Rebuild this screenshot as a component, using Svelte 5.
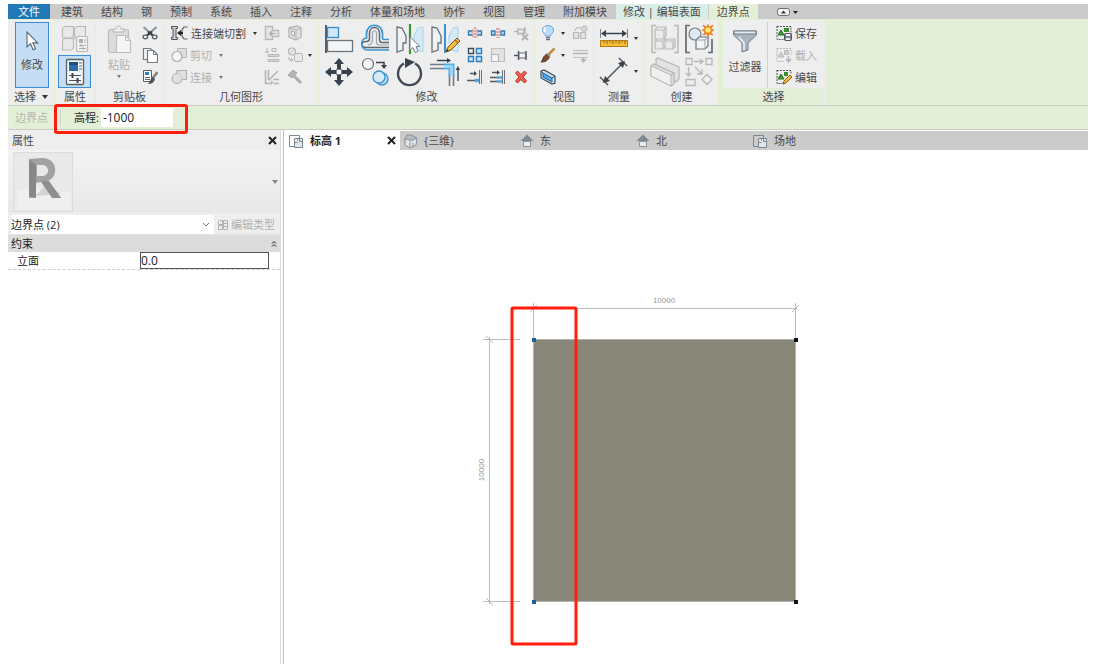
<script>
	const tabs = ['建筑', '结构', '钢', '预制', '系统', '插入', '注释', '分析', '体量和场地', '协作', '视图', '管理', '附加模块'];

	const views = [
		{ title: '标高 1', icon: 'plan', active: true },
		{ title: '{三维}', icon: 'cube' },
		{ title: '东', icon: 'house' },
		{ title: '北', icon: 'house' },
		{ title: '场地', icon: 'plan' }
	];

	const modifyBig = [
		['align', '对齐'], ['offset', '偏移'], ['mirrorPick', '镜像 - 拾取轴'], ['mirrorDraw', '镜像 - 绘制轴'],
		['move', '移动'], ['copyObj', '复制'], ['rotate', '旋转'], ['trimCorner', '修剪为角']
	];
	const modifySmall = [
		['split', '拆分图元'], ['splitGap', '用间隙拆分'], ['unpin', '解锁'],
		['array', '阵列'], ['scale', '缩放'], ['pin', '锁定'],
		['trimOne', '修剪单个图元'], ['trimMany', '修剪多个图元'], ['remove', '删除']
	];
	const geometry = [
		{ icon: 'cope', text: '连接端切割', side: ['joinEnd', 'face'] },
		{ icon: 'cut', text: '剪切', off: true, side: ['beamJoin', 'splitFace'], caret: true },
		{ icon: 'join', text: '连接', off: true, side: ['wallJoin', 'hammer'] }
	];
	const selection = [
		{ icon: 'selSave', text: '保存' },
		{ icon: 'selLoad', text: '载入', off: true },
		{ icon: 'selEdit', text: '编辑' }
	];

	let elevation = $state('-1000');
	let facade = $state('0.0');

	// every entry: [width, height, body]
	const icons = {
		cursor: [14, 20, '<path d="M2 1v15l3.5-3.3 2.6 6 2.4-1-2.6-5.8h4.8z" fill="#fff" stroke="#5b6672" stroke-width="1.1"/>'],
		types: [28, 28, '<g fill="#e9e9e9" stroke="#bababa" stroke-width="1.200"><path d="M1.500 4l2-2.500h9v9l-2 2.500h-9zM13.500 4l2-2.500h9v9l-2 2.500h-9zM1.500 16l2-2.500h9v9l-2 2.500h-9z"/><rect x="15.500" y="11.500" width="11" height="15" rx="1" fill="#f3f3f3"/></g><path d="M18 14h4v4h-4z" fill="#b0b0b0"/><path d="M18 20.500h7M18 23.500h7M24 14v4M20 19v3M22 22v3" stroke="#b0b0b0"/>'],
		props: [20, 28, '<rect x="1.500" y="1.500" width="17" height="25" rx="1" fill="#f6f8fa" stroke="#56606a" stroke-width="1.300"/><path d="M4 4h9v9H4z" fill="#2d6ea8"/><path d="M4 4h9v3H4z" fill="#1c4f7d"/><path d="M14 5h3M14 8h3M14 11h3" stroke="#596370"/><path d="M4 17.500h12M4 22.500h12" stroke="#4c5660"/><path d="M7.500 15v5M12.500 20v5" stroke="#3c454e" stroke-width="2"/>'],
		paste: [25, 29, '<rect x="1.500" y="4.500" width="20" height="23" rx="2" fill="#dcdcdc" stroke="#bababa" stroke-width="1.200"/><path d="M6 7V4h3c0-4 5-4 5 0h3v3z" fill="#eee" stroke="#b5b5b5"/><path d="M9.500 10.500h9l5 5v12h-14z" fill="#f5f5f5" stroke="#bfbfbf" stroke-width="1.200"/><path d="M18.500 10.500v5h5" fill="none" stroke="#bfbfbf"/>'],
		scissors: [16, 16, '<path d="M1.500 2l10 9M14.500 2l-10 9" stroke="#8c949c" stroke-width="2"/><path d="M6 6.500l5 4M10 6.500l-5 4" stroke="#333b43" stroke-width="2"/><g fill="#f3f3f3" stroke="#545c64" stroke-width="1.300"><ellipse cx="3.300" cy="12" rx="2.300" ry="1.800"/><ellipse cx="12.700" cy="12" rx="2.300" ry="1.800"/></g>'],
		copy: [16, 16, '<path d="M1.500 1.500h7l2 2v9h-9z" fill="#f4f4f4" stroke="#727a82" stroke-width="1.200"/><path d="M5.500 3.500h6l4 4v8h-10z" fill="#fff" stroke="#727a82" stroke-width="1.200"/><path d="M11.500 3.500v4h4" fill="none" stroke="#727a82"/>'],
		match: [16, 16, '<path d="M1.500 1.500h8v11h-8z" fill="#fff" stroke="#56606a"/><path d="M3 3h4v3H3z" fill="#2b83c6"/><path d="M3 8.500h5M3 10.500h5" stroke="#56606a"/><path d="M15.500 3L10 10" stroke="#7d858d" stroke-width="2.500"/><path d="M11 8l2 2c-1 4-4 5-7 5 2-2 2-5 5-7z" fill="#4c545c"/>'],
		cope: [17, 16, '<path d="M.5 1.500h6v2H5v9h1.500v2h-6v-2H2v-9H.5z" fill="#c9ced3" stroke="#4a525a"/><path d="M16.500 2H13l-2 3v2M16.500 14H13l-2-3V9" fill="none" stroke="#59626b" stroke-width="1.200"/><path d="M6 8l4-3v2h2v2h-2v2z" fill="#222"/>'],
		cut: [16, 16, '<path d="M6.500 1.500h9v9h-9z" fill="#dedede" stroke="#b4b4b4"/><circle cx="6" cy="9.500" r="5" fill="#f4f4f4" stroke="#b0b0b0" stroke-width="1.200"/>'],
		join: [16, 16, '<path d="M6 1.500h9.500v9H11a5 5 0 1 1-5-6z" fill="#e0e0e0" stroke="#b0b0b0" stroke-width="1.200"/><path d="M6 4.500a5 5 0 0 1 5 6" fill="none" stroke="#c6c6c6"/>'],
		joinEnd: [16, 16, '<path d="M1.500 1.500h7v4h6v6h-6v3h-7z" fill="#e4e4e4" stroke="#b9b9b9" stroke-width="1.400"/><path d="M5 8.500h7M5 8.500l3-2.500v5z" stroke="#b0b0b0" fill="#b0b0b0"/>'],
		face: [16, 16, '<path d="M2 3l8-2 4 2v9l-5 3-7-3z" fill="#e2e2e2" stroke="#b3b3b3" stroke-width="1.300"/><path d="M2 3l7 2v10M9 5l5-2" fill="none" stroke="#b3b3b3"/><path d="M4.500 6l3 1v4l-3-1z" fill="#f4f4f4" stroke="#a6a6a6"/>'],
		beamJoin: [16, 16, '<path d="M3 1v5M1 4l2 2 2-2M8 1.500h4v3H8z" fill="none" stroke="#b5b5b5"/><path d="M4 7.500h11v2H4zM4 12.500h11v2H4z" fill="#d8d8d8" stroke="#b8b8b8"/>'],
		splitFace: [16, 16, '<circle cx="5" cy="4.500" r="3.500" fill="none" stroke="#b5b5b5" stroke-width="1.200"/><path d="M2.500 7l5-5M2 10v3h3M4 11l2 2-2 2" fill="none" stroke="#b5b5b5"/><rect x="7.500" y="6.500" width="8" height="8" rx="1" fill="#e8e8e8" stroke="#b5b5b5"/>'],
		wallJoin: [16, 16, '<path d="M1.500 1v13.500H8M4.500 1v10M4.500 11.500L14 2M7 12l2 2M9.500 10.500H15M9.500 14.500H15" fill="none" stroke="#b4b4b4" stroke-width="1.500"/>'],
		hammer: [16, 16, '<path d="M1 6l5-5 4 3-5 5z" fill="#b5b5b5" stroke="#a6a6a6"/><path d="M7 7l7 7" stroke="#acacac" stroke-width="3"/>'],
		align: [30, 30, '<path d="M2 1v28" stroke="#333a42" stroke-width="1.600"/><rect x="3.500" y="3.500" width="11" height="10" fill="#cfe7f8" stroke="#318bcd" stroke-width="1.300"/><rect x="3.500" y="16.500" width="25" height="11" fill="#f3f4f5" stroke="#6d747c" stroke-width="1.300"/>'],
		offset: [30, 30, '<path d="M29 18.500h-7c-2 0-2.500-1-2.500-3V9.500c0-8-10-8-10 0v5c0 2-1 3-3 3-6 0-6 6 0 6h22.500" fill="none" stroke="#5d656e" stroke-width="1.500"/><path d="M29 21H19c-2 0-2.500-1-2.500-3V9c0-3-4-3-4 0v6c0 4-1 6-5 6" fill="none" stroke="#9fa6ad" stroke-width="1.200"/><path d="M29 15.500h-5c-1 0-1.500-.5-1.500-1.500V9.500c0-11-16-11-16 0V14c-7 1-6 12 1 12H29" fill="none" stroke="#3d94d3" stroke-width="1.700"/>'],
		mirrorPick: [30, 30, '<path d="M2 3l5 1 4 8v7H8v7l-6 2z" fill="#f0f1f2" stroke="#69717a" stroke-width="1.300"/><path d="M28 3l-5 1-4 8v7h3v7l6 2z" fill="#d5eaf7" stroke="#a8d3ee"/><path d="M15 0v30" stroke="#35972d" stroke-width="2.200"/><path d="M15 13v13l3-2.500 2 5 3-1-2-5h4z" fill="#fff" stroke="#7c838a"/>'],
		mirrorDraw: [30, 30, '<path d="M2 3l5 1 4 8v7H8v7l-6 2z" fill="#f0f1f2" stroke="#69717a" stroke-width="1.300"/><path d="M28 3l-5 1-4 8v7h3v7l6 2z" fill="#d5eaf7" stroke="#a8d3ee"/><path d="M15 0v29" stroke="#3692d4" stroke-width="2"/><path d="M16 28l2-5 9-9 3 3-9 9z" fill="#f5bd38" stroke="#765224"/><path d="M25 16l3 3" stroke="#d5584c" stroke-width="1.500"/><path d="M16 28l1-3 2 2z" fill="#333"/>'],
		move: [30, 30, '<path d="M15 1l5 6h-3v5h-4V7h-3zM15 29l5-6h-3v-5h-4v5h-3zM1 15l6-5v3h5v4H7v3zM29 15l-6-5v3h-5v4h5v3z" fill="#39424c"/><rect x="12.500" y="12.500" width="5" height="5" fill="#fff" stroke="#77808a"/>'],
		copyObj: [30, 30, '<circle cx="8" cy="7" r="5.500" fill="#f8f8f8" stroke="#666e76" stroke-width="1.200"/><path d="M16 5.500h8v4" fill="none" stroke="#39424c" stroke-width="1.500"/><path d="M21 8h6l-3 4z" fill="#39424c"/><circle cx="22" cy="22" r="6" fill="#b8daf2" stroke="#3b91cf" stroke-width="1.300"/><circle cx="19" cy="20" r="6" fill="#d6ebf9" stroke="#3b91cf" stroke-width="1.300"/>'],
		rotate: [30, 30, '<path d="M20 6.500A11.500 11.500 0 1 1 9 6.500" fill="none" stroke="#414a54" stroke-width="2.400"/><path d="M10 1l10 4-10 6z" fill="#39424c"/>'],
		trimCorner: [30, 30, '<path d="M0 7.500h15M0 11.500h15M19.500 17v12M23.500 17v12" stroke="#727a83" stroke-width="1.600"/><path d="M14 9.500h7.500V19" fill="none" stroke="#52aee9" stroke-width="6"/><path d="M14 9.500h7.500V19" fill="none" stroke="#9ed5f8" stroke-width="3"/><path d="M7 3.500h11M28 24V12" stroke="#39424c" stroke-width="1.300"/><path d="M17 1l4 2.500L17 6zM25.500 13L28 9l2 4z" fill="#39424c"/>'],
		split: [16, 16, '<path d="M1.500 6h13v4h-13z" fill="#b9dcf4" stroke="#3478ae" stroke-width="1.300"/><path d="M6 5h4v6H6z" fill="#f2dede"/><path d="M8 2v12" stroke="#dc5a50" stroke-dasharray="2 1"/><path d="M6 3.500v9M10 3.500v9" stroke="#e39a94"/>'],
		splitGap: [16, 16, '<path d="M1.500 6H5v4H1.500zM11 6h3.500v4H11z" fill="#b9dcf4" stroke="#3478ae" stroke-width="1.300"/><path d="M7 3v10M9 3v10" stroke="#dc5a50" stroke-dasharray="2 1"/>'],
		unpin: [16, 16, '<path d="M1 6.500h4M5 3v7M6 4.500h5v4H6M12 2v7" fill="none" stroke="#b4b4b4" stroke-width="1.400"/><path d="M9 9l6 6M15 9l-6 6" stroke="#b4b4b4" stroke-width="2"/>'],
		array: [16, 16, '<g fill="#c9e4f7" stroke="#2c7fbd" stroke-width="1.400"><path d="M9.500 1.500h5v5h-5zM1.500 9.500h5v5h-5zM9.500 9.500h5v5h-5z"/></g><path d="M1.500 1.500h5v5h-5z" fill="#f4f4f4" stroke="#414a54" stroke-width="1.400"/>'],
		scale: [16, 16, '<path d="M1.500 1.500h13v13h-13z" fill="#e3e3e3" stroke="#c0c0c0" stroke-width="1.200"/><path d="M1.500 7.500h7v7h-7z" fill="#f5f5f5" stroke="#b6b6b6" stroke-width="1.200"/>'],
		pin: [16, 16, '<path d="M1 8.500h4" stroke="#49515a" stroke-width="1.400"/><path d="M5.500 4v9M13 4v9" stroke="#49515a" stroke-width="1.400"/><path d="M6 6h6.500v5H6z" fill="#f3f4f5" stroke="#5f6770"/>'],
		trimOne: [16, 16, '<path d="M3 4.500h6M0 11.500h9" stroke="#525b65" stroke-width="1.600"/><path d="M7 2l3 2.500L7 7z" fill="#414a54"/><path d="M8 11.500h5" stroke="#48a7e5" stroke-width="3.500"/><path d="M12.500 1v14M14.500 1v14" stroke="#69717a"/>'],
		trimMany: [16, 16, '<path d="M2 3.500h6M0 8.500h8M0 12.500h8" stroke="#525b65" stroke-width="1.600"/><path d="M7 1l3 2.500L7 6z" fill="#414a54"/><path d="M7 8.500h5M7 12.500h5" stroke="#48a7e5" stroke-width="2.500"/><path d="M12.500 1v14M14.500 1v14" stroke="#69717a"/>'],
		remove: [16, 16, '<path d="M2.500 4l2-2L8 5.500 11.500 2l2 2L10 8l3.500 4-2 2L8 10.500 4.500 14l-2-2L6 8z" fill="#ee5c50" stroke="#be3028"/>'],
		bulb: [16, 16, '<path d="M5.500 11c0-2-3-3-3-6 0-6 11-6 11 0 0 3-3 4-3 6z" fill="#bcdcf8" stroke="#6aa8dc"/><path d="M5.500 2.500C4 4 4.500 6 5 7" stroke="#fff" stroke-width="2" fill="none"/><path d="M6 12.500h4M6 14.500h4" stroke="#68727c" stroke-width="1.400"/>'],
		brush: [16, 16, '<path d="M14.500 1.500L8 8" stroke="#c98744" stroke-width="2.500"/><path d="M7 7l2.500 2.500C8 14 5 15 1 15c2-2 2-6 6-8z" fill="#7b4a2a" stroke="#5a3a26"/><path d="M7.500 6.500L10 9" stroke="#999" stroke-width="2"/>'],
		box3d: [16, 16, '<path d="M1 2l3-1 11 6v7l-3 1L1 9z" fill="#cfe2f1" stroke="#3c4c5c" stroke-width="1.200"/><path d="M3 4l9 5v4L3 8z" fill="#4fa8ea" stroke="#1e689f"/><path d="M12 9l3-2M1 2l2 2" stroke="#3c4c5c"/>'],
		displace: [16, 16, '<path d="M1.500 7.500h5v6h-5zM8.500 7.500h5v6h-5z" fill="#e4e4e4" stroke="#b8b8b8" stroke-width="1.200"/><path d="M3 6c0-3 3-4 6-3" fill="none" stroke="#b8b8b8" stroke-width="1.200"/><circle cx="12" cy="4" r="2.500" fill="#ddd" stroke="#b8b8b8"/><path d="M12 0v2M15 1l-1 1M16 4h-2" stroke="#b8b8b8"/>'],
		lines: [16, 16, '<path d="M1 3.500h15" stroke="#bbb"/><path d="M1 6.500h15" stroke="#b5b5b5" stroke-width="1.600"/><path d="M1 10.500h15" stroke="#c4c4c4"/><path d="M11.500 10v4M9 12l2.500 3 2.500-3" fill="none" stroke="#b5b5b5" stroke-width="1.500"/>'],
		ruler: [30, 20, '<path d="M4 4.500h22" stroke="#39424c" stroke-width="1.500"/><path d="M2 4.500L7 1v7zM28 4.500L23 1v7z" fill="#39424c"/><path d="M1.500 0v9M28.500 0v9" stroke="#7a838c"/><rect x="1.500" y="11.500" width="27" height="6" fill="#f5bf35" stroke="#b47c14"/><path d="M5 12v2M8 12v3M11 12v2M14 12v3M17 12v2M20 12v3M23 12v2M26 12v3" stroke="#8a611d"/>'],
		aligned: [30, 30, '<path d="M5 25L25 5M1 20l8 8M20 1l8 8" stroke="#4b555f" stroke-width="1.500"/><path d="M4 26l2-7 5 5zM26 4l-7 2 5 5z" fill="#39424c"/>'],
		assembly: [30, 30, '<path d="M6 1.500H2v27h4M24 1.500h4v27h-4" fill="none" stroke="#b8b8b8" stroke-width="1.500"/><g fill="#ebebeb" stroke="#b9b9b9" stroke-width="1.200"><path d="M5 6l2-3h9v9l-2 3H5zM5 17l2-2h8v8l-2 2H5zM15 17l2-2h8v8l-2 2h-8z"/><path d="M5 6h9v9M14 6l2-3M5 17h8v8M15 17h8v8" fill="none"/></g>'],
		createGroup: [30, 30, '<path d="M6 1.500H2v27h4M24 28.500h4V15" fill="none" stroke="#626c76" stroke-width="1.700"/><circle cx="11" cy="10" r="6" fill="#dfe9f1" stroke="#74808b" stroke-width="1.200"/><path d="M12 16l3-3h9v9l-3 3h-9z" fill="#f3f4f5" stroke="#6c757e" stroke-width="1.200"/><path d="M12 16h9v9M21 16l3-3" fill="none" stroke="#9ca4ac"/><path d="M24 0l1 3 4-2-2 4 3 1-3 2 2 3-4-1-1 3-1-3-4 1 2-3-3-2 3-1-2-4 4 2z" fill="#f48c20" stroke="#d9640d" stroke-width=".5"/><circle cx="24" cy="6" r="2.600" fill="#ffe779"/>'],
		parts: [30, 30, '<path d="M6 8V2l2-1 21 9v12l-3 3z" fill="#e2e2e2" stroke="#b8b8b8" stroke-width="1.200"/><path d="M1 9l3-2 20 9v11l-3 2L1 19z" fill="#dcdcdc" stroke="#b4b4b4" stroke-width="1.200"/><path d="M1 9l20 9v11L1 19z" fill="#f1f1f1" stroke="#b8b8b8"/><path d="M21 18l3-2" stroke="#b8b8b8"/>'],
		similar: [30, 30, '<g fill="#eee" stroke="#b7b7b7" stroke-width="1.300"><path d="M2 1.500h6v6H2zM22 1.500h6v6h-6zM2 22.500h9v6H2zM23 17.500l5 5-5 5-5-5z"/><path d="M10 4.500h9M16 2l3 2.500L16 7M4.500 10v8M2 16l2.500 3L7 16M11 10l7 7M13 17h5v-5" fill="none"/></g>'],
		filter: [26, 24, '<path d="M1.500 2h23v4L16 14v7l-6 2v-9L1.500 6z" fill="#a9b4bf" stroke="#747e88"/><path d="M2 2h22v3H2z" fill="#e6ebef" stroke="#747e88"/><path d="M7 8l5 6v7" fill="none" stroke="#dfe5ea" stroke-width="2"/>'],
		selSave: [16, 16, '<path d="M1 1.500h14V9M1 1v13.500h7" fill="none" stroke="#505860" stroke-dasharray="2 1"/><path d="M2 10l3-5 3 5z" fill="#3e9b35" stroke="#29751f"/><path d="M8 3h5v4H8z" fill="#3a8d31"/><rect x="8.500" y="8.500" width="7" height="7" rx="1" fill="#7d8690" stroke="#4f5962"/><path d="M10 9h4v2h-4zM10 13h4v2h-4z" fill="#eef1f3"/>'],
		selLoad: [16, 16, '<path d="M1 1.500h14V9M1 1v13.500h7" fill="none" stroke="#bbb" stroke-dasharray="2 1"/><path d="M2 10l3-5 3 5zM8.500 3.500h4v4h-4z" fill="#ccc" stroke="#bbb"/><path d="M12.500 9v5M10 12l2.500 3 2.500-3" fill="none" stroke="#b5b5b5" stroke-width="1.500"/>'],
		selEdit: [16, 16, '<path d="M1 1.500h14V5M1 1v13.500h7" fill="none" stroke="#505860" stroke-dasharray="2 1"/><path d="M2 10l3-5 3 5z" fill="#3e9b35" stroke="#29751f"/><path d="M8 3h4v4H8z" fill="#3a8d31"/><path d="M7 15l1-3 6-6 2 2-6 6z" fill="#f5bd38" stroke="#8c5b20"/>'],
		plan: [16, 16, '<path d="M1.500 2.500h10v3M7 13.500H1.500v-11" fill="none" stroke="#7d8791"/><path d="M6.500 5.500h8v9h-8z" fill="#e4e7ea" stroke="#7d8791"/><path d="M6.500 9.500h3M9.500 5.500v2M11.500 5.500v3h3" fill="none" stroke="#7d8791"/>'],
		cube: [14, 16, '<path d="M1 6l6-4 6 4-1 6-6 3-5-3z" fill="#e3e6e9" stroke="#8a929a"/><path d="M0 7l3-5 4 0 6 3-6 3-4-2z" fill="#b6bcc2" stroke="#8a929a"/><path d="M6 9v6M9 10v4" fill="none" stroke="#8a929a"/>'],
		house: [14, 16, '<path d="M7 1.500L0.500 8h13z" fill="#7f878f"/><path d="M3.500 8.500h7v5h-7z" fill="#e9ebed" stroke="#8b939b"/>'],
		editType: [12, 12, '<g fill="none" stroke="#b0b0b0"><path d="M1.500 2.500l1-1h3v4h-4zM1.500 6.500h4v4h-4zM6.500 1.500h4v9h-4zM6.500 4.500h4M6.500 7.500h4"/></g>']
	};
</script>

{#snippet icon(name)}
	<svg class="icon" width={icons[name][0]} height={icons[name][1]} viewBox="0 0 {icons[name][0]} {icons[name][1]}" aria-hidden="true">
		{@html icons[name][2]}
	</svg>
{/snippet}

{#snippet tool(name, label)}
	<button class="tool" aria-label={label}>{@render icon(name)}</button>
{/snippet}

<div class="app">
	<!-- Ribbon tabs -->
	<nav class="tabs">
		<button class="file">文件</button>
		{#each tabs as tab}
			<button>{tab}</button>
		{/each}
		<button class="context">修改 | 编辑表面</button>
		<button class="current">边界点</button>
		<button class="collapse" aria-label="最小化功能区">
			<svg width="24" height="10" viewBox="0 0 24 10"><rect x="1.500" y="1.500" width="12" height="7" rx="2" fill="#f1f1f1" stroke="#656b74" /><path d="M5 6.500l2.500-3 2.500 3z" fill="#333" /><path d="M17 4h5l-2.500 3z" fill="#222" /></svg>
		</button>
	</nav>

	<!-- Ribbon panels -->
	<div class="ribbon">
		<section class="panel select">
			<div class="body"><button class="big on">{@render icon('cursor')}<span>修改</span></button></div>
			<h2>选择 <i class="caret wide"></i></h2>
		</section>
		<section class="panel props">
			<div class="body">
				{@render tool('types', '类型属性')}
				<button class="tool on" aria-label="属性">{@render icon('props')}</button>
			</div>
			<h2>属性</h2>
		</section>
		<section class="panel clipboard">
			<div class="body">
				<button class="big off">{@render icon('paste')}<span>粘贴</span><i class="caret"></i></button>
				<div class="stack">
					{@render tool('scissors', '剪切到剪贴板')}
					{@render tool('copy', '复制到剪贴板')}
					{@render tool('match', '匹配类型属性')}
				</div>
			</div>
			<h2>剪贴板</h2>
		</section>
		<section class="panel geometry">
			<div class="body">
				{#each geometry as row}
					<button class="line" class:off={row.off}>{@render icon(row.icon)}<span>{row.text}</span><i class="caret"></i></button>
					{@render tool(row.side[0], row.text + '选项')}
					<button class="tool" aria-label={row.text + '面'}>{@render icon(row.side[1])}{#if row.caret}<i class="caret"></i>{/if}</button>
				{/each}
			</div>
			<h2>几何图形</h2>
		</section>
		<section class="panel modify">
			<div class="body">
				<div class="large">
					{#each modifyBig as [name, label]}
						{@render tool(name, label)}
					{/each}
				</div>
				<div class="small">
					{#each modifySmall as [name, label]}
						{@render tool(name, label)}
					{/each}
				</div>
			</div>
			<h2>修改</h2>
		</section>
		<section class="panel view">
			<div class="body">
				<button class="tool" aria-label="隐藏">{@render icon('bulb')}<i class="caret"></i></button>
				{@render tool('displace', '置换图元')}
				<button class="tool" aria-label="替换">{@render icon('brush')}<i class="caret"></i></button>
				{@render tool('lines', '线处理')}
				{@render tool('box3d', '选择框')}
			</div>
			<h2>视图</h2>
		</section>
		<section class="panel measure">
			<div class="body">
				<button class="tool" aria-label="测量">{@render icon('ruler')}<i class="caret"></i></button>
				<button class="tool" aria-label="对齐标注">{@render icon('aligned')}<i class="caret"></i></button>
			</div>
			<h2>测量</h2>
		</section>
		<section class="panel create">
			<div class="body">
				{@render tool('assembly', '创建部件')}
				{@render tool('createGroup', '创建组')}
				{@render tool('parts', '创建零件')}
				{@render tool('similar', '创建类似')}
			</div>
			<h2>创建</h2>
		</section>
		<section class="panel picked">
			<div class="body">
				<button class="big">{@render icon('filter')}<span>过滤器</span></button>
				<div class="stack">
					{#each selection as row}
						<button class="line" class:off={row.off}>{@render icon(row.icon)}<span>{row.text}</span></button>
					{/each}
				</div>
			</div>
			<h2>选择</h2>
		</section>
	</div>

	<!-- Options bar -->
	<div class="options">
		<span class="mode">边界点</span>
		<div class="field">
			<label for="elevation">高程:</label>
			<input id="elevation" bind:value={elevation} />
		</div>
	</div>

	<div class="workspace">
		<!-- Properties palette -->
		<aside>
			<header>
				<span>属性</span>
				<button aria-label="关闭属性"><svg width="9" height="9" viewBox="0 0 9 9"><path d="M1 1l7 7M8 1L1 8" stroke="#222" stroke-width="2" /></svg></button>
			</header>
			<button class="family" aria-label="类型选择器">
				<svg class="thumb" width="60" height="60" viewBox="0 0 60 60">
					<rect x=".5" y=".5" width="59" height="59" fill="#e9e9e9" stroke="#dcdcdc" />
					<path d="M4 38l12-3 42 6v16H4z" fill="#efefef" />
					<path d="M22 44l26-2-14-10z" fill="#d2d2d2" />
					<path fill-rule="evenodd" d="M16 7l13-1c16 0 17 19 6 23l13 17-9-1-11-15-5 1v15h-7zM24 13v11h5c8 0 8-11 0-11z" fill="#a2a2a2" />
					<path d="M16 7l7 6v33l-7-2z" fill="#888" />
					<path d="M28 29l8 0 12 17h-9z" fill="#8f8f8f" />
				</svg>
				<i class="caret wide"></i>
			</button>
			<div class="instance">
				<div class="choice">
					<select aria-label="图元">
						<option>边界点 (2)</option>
					</select>
					<svg width="8" height="6" viewBox="0 0 8 6" aria-hidden="true"><path d="M1 1l3 3 3-3" fill="none" stroke="#777" /></svg>
				</div>
				<button disabled>{@render icon('editType')}编辑类型</button>
			</div>
			<table>
				<colgroup>
					<col class="name" />
					<col />
				</colgroup>
				<thead>
					<tr>
						<th colspan="2"><div class="group">约束 <svg width="6" height="8" viewBox="0 0 6 8"><path d="M1 3.500l2-2 2 2M1 6.500l2-2 2 2" fill="none" stroke="#222" /></svg></div></th>
					</tr>
				</thead>
				<tbody>
					<tr>
						<td><label for="facade">立面</label></td>
						<td><input id="facade" bind:value={facade} /></td>
					</tr>
				</tbody>
			</table>
		</aside>

		<!-- Drawing area -->
		<main>
			<nav class="views">
				{#each views as view}
					<button class:active={view.active}>
						{@render icon(view.icon)}<span>{view.title}</span>
						{#if view.active}
							<svg class="close" width="9" height="9" viewBox="0 0 9 9"><path d="M1 1l7 7M8 1L1 8" stroke="#222" stroke-width="2" /></svg>
						{/if}
					</button>
				{/each}
			</nav>
			<svg class="canvas" role="img" aria-label="标高 1">
				<rect x="249.500" y="189.500" width="262" height="262" fill="#89867a" stroke="#b3b3ae" />
				<g stroke="#bcbcbc" fill="none">
					<path d="M249.500 153v36M511.500 153v36M247 158.500h266M246 162l7-7M508 162l7-7" />
					<path d="M199 189.500h37M199 451.500h37M205.500 187v267M202 186l7 7M202 448l7 7" />
				</g>
				<g class="dims" text-anchor="middle">
					<text x="380" y="153">10000</text>
					<text transform="translate(200 320) rotate(-90)">10000</text>
				</g>
				<path d="M248 188h4v4h-4zM248 450h4v4h-4z" fill="#1b629c" />
				<path d="M510 188h4v4h-4zM510 450h4v4h-4z" fill="#111" />
				<rect x="228" y="158" width="64" height="336" rx="1" fill="none" stroke="#ff1d0c" stroke-width="3" />
			</svg>
		</main>
	</div>
</div>

<style>
	:global(body) {
		background: #fff;
	}

	.app {
		box-sizing: border-box;
		min-height: 100vh;
		padding: 4px 15px 0 8px;
		display: flex;
		flex-direction: column;
		font: 11px/15px "Open Sans", "Noto Sans CJK SC", sans-serif;
		color: #484848;
	}

	button, input, select {
		font: inherit;
		color: inherit;
		margin: 0;
		padding: 0;
		border: 0;
		background: none;
		box-sizing: border-box;
	}

	button {
		display: flex;
		align-items: center;
		white-space: nowrap;
	}

	svg {
		display: block;
		flex: none;
	}

	.caret {
		flex: none;
		width: 0;
		height: 0;
		border: 2px solid transparent;
		border-top: 3px solid #333;
		border-bottom: 0;
	}

	.caret.wide {
		border-width: 4px 3px 0;
	}

	/* tabs */
	.tabs {
		display: flex;
		height: 15px;
		background: #cbcbcb;
	}

	.tabs button {
		padding: 0 9px;
	}

	.tabs .file {
		padding: 0 10px;
		background: #2079b4;
		color: #fff;
		margin-right: 2px;
	}

	.tabs .context {
		padding: 0 7px;
		background: #d9edea;
	}

	.tabs .current {
		padding: 0 8px;
		margin-left: 1px;
		background: #e4efd8;
	}

	.tabs .collapse {
		padding: 0 18px;
	}

	/* ribbon */
	.ribbon {
		display: flex;
		gap: 1px;
		padding-top: 1px;
		background: #e4efd8;
		border-bottom: 1px solid #c9cdc5;
	}

	.panel {
		background: #eee;
	}

	.body {
		display: grid;
		height: 66px;
		padding-top: 2px;
	}

	h2 {
		display: flex;
		align-items: center;
		justify-content: center;
		gap: 6px;
		height: 17px;
		margin: 0;
		font-size: 11px;
		font-weight: normal;
	}

	.off {
		color: #b0b0b0;
	}

	.off .caret {
		border-top-color: #777;
	}

	.on {
		background: #c5def5;
		outline: 1px solid #3c8dd8;
		outline-offset: -1px;
	}

	.big {
		flex-direction: column;
		justify-content: center;
		gap: 6px;
		padding-bottom: 8px;
	}

	.line {
		gap: 3px;
	}

	.stack, .large, .small {
		display: grid;
	}

	.select .body {
		padding: 2px 5px 0 7px;
		grid-template-columns: 34px;
	}

	.props .body {
		padding: 2px 4px 0 3px;
		grid-template: 33px 33px / 33px;
	}

	.props .tool {
		justify-content: center;
	}

	.clipboard .body {
		grid-template-columns: 46px 21px;
	}

	.clipboard .big {
		gap: 3px;
	}

	.geometry .body {
		padding-left: 7px;
		grid-template: repeat(3, 22px) / 93px 23px 31px;
	}

	.geometry .line .caret {
		margin-left: 4px;
	}

	.tool .caret {
		margin-left: 5px;
	}

	.modify .body {
		padding-left: 5px;
		grid-template-columns: 143px 67px;
	}

	.large {
		grid-template: repeat(2, 33px) / 36px 35px 35px 37px;
	}

	.small {
		grid-template: repeat(3, 22px) / repeat(3, 23px);
	}

	.view .body {
		padding-left: 5px;
		grid-template: repeat(3, 22px) / 32px 21px;
	}

	.measure .body {
		padding-left: 5px;
		grid-template: repeat(2, 33px) / 45px;
	}

	.create .body {
		padding-left: 5px;
		grid-template: repeat(2, 33px) / repeat(2, 34px);
	}

	.picked {
		margin-left: 4px;
		background: #e4efd8;
		border-right: 1px solid #eee;
	}

	.picked .body {
		grid-template-columns: 44px 57px;
		background: #eee;
	}

	.picked .stack {
		padding-left: 8px;
		border-left: 1px solid #d0d0d0;
	}

	/* options bar */
	.options {
		display: flex;
		align-items: center;
		height: 23px;
		background: #e4efd8;
		border-bottom: 1px solid #c9cdc5;
	}

	.mode {
		padding: 0 12px 0 7px;
		color: #b4b8ae;
		border-right: 1px solid #cdd3c6;
	}

	.field {
		position: relative;
		display: flex;
		align-items: center;
		padding-left: 13px;
		color: #222;
	}

	.field::after {
		content: "";
		position: absolute;
		inset: -4px -15px -7px -7px;
		border: 3px solid #ff1d0c;
		border-radius: 3px;
		pointer-events: none;
		z-index: 1;
	}

	.field input {
		width: 72px;
		height: 19px;
		margin-left: 2px;
		padding-left: 2px;
		background: #fff;
		font-size: 12px;
	}

	/* workspace */
	.workspace {
		flex: 1;
		display: grid;
		grid-template-columns: 273px 1fr;
	}

	aside {
		border-right: 1px solid #ddd;
	}

	aside header {
		display: flex;
		align-items: center;
		justify-content: space-between;
		height: 20px;
		padding: 0 3px 0 4px;
		background: #eee;
	}

	.family {
		justify-content: space-between;
		width: 100%;
		height: 65px;
		padding: 0 2px 0 5px;
		background: linear-gradient(#f3f3f3, #e8e8e8);
		border-bottom: 2px solid #eee;
	}

	.family .caret {
		border-top-color: #888;
	}

	.instance {
		display: flex;
		height: 20px;
		background: #eee;
		border-bottom: 1px solid #e4e4e4;
		box-sizing: border-box;
	}

	.choice {
		flex: 1;
		display: flex;
		align-items: center;
		margin-left: 3px;
		padding-right: 4px;
		background: #fff;
		color: #222;
	}

	select {
		flex: 1;
		appearance: none;
	}

	.instance button {
		gap: 2px;
		padding: 0 5px 0 3px;
		color: #b0b0b0;
	}

	table {
		width: 100%;
		border-spacing: 0;
		table-layout: fixed;
		color: #222;
	}

	.name {
		width: 132px;
	}

	th {
		padding: 0;
		font-weight: normal;
	}

	.group {
		display: flex;
		align-items: center;
		justify-content: space-between;
		height: 17px;
		padding: 0 3px;
		background: #dcdcdc;
	}

	td {
		height: 17px;
		padding: 0;
		border-bottom: 1px dashed #ccc;
	}

	td label {
		padding-left: 9px;
	}

	td input {
		display: block;
		width: calc(100% - 11px);
		height: 17px;
		border: 1px solid #555;
		font-size: 12px;
	}

	main {
		display: flex;
		flex-direction: column;
		margin-left: 2px;
		border-left: 1px solid #bbb;
	}

	.views {
		display: flex;
		height: 19px;
		margin-top: 1px;
		margin-left: 2px;
		background: #cbcbcb;
	}

	.views button {
		gap: 6px;
		width: 116px;
		padding: 0 4px;
	}

	.views .active {
		width: 114px;
		padding: 0 4px 0 2px;
		background: #fff;
		color: #222;
		font-weight: bold;
	}

	.close {
		margin-left: auto;
	}

	.canvas {
		flex: 1;
		width: 100%;
		min-height: 500px;
	}

	.dims {
		font: 8px "Liberation Sans", sans-serif;
		fill: #999;
	}
</style>
